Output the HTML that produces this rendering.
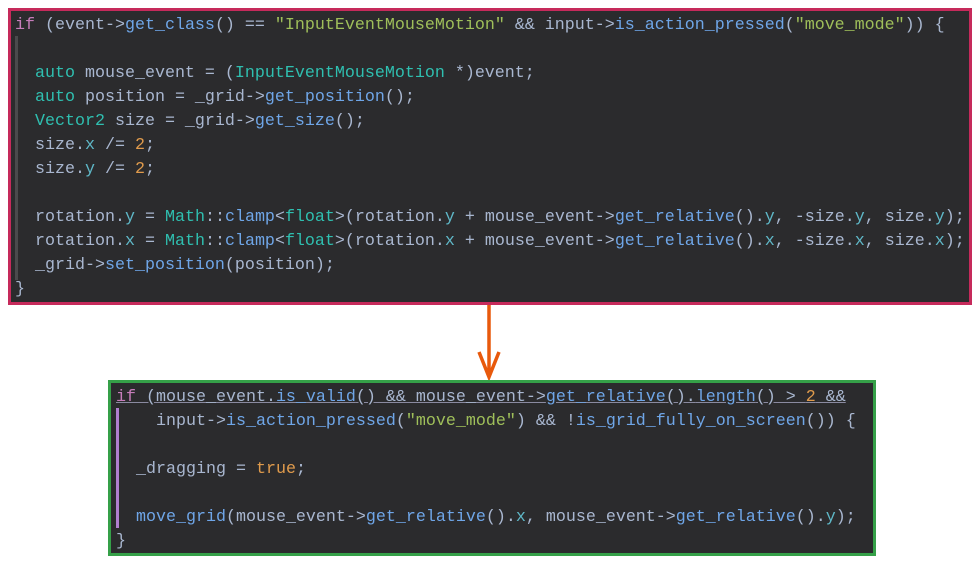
<!DOCTYPE html>
<html><head><style>
body{margin:0;width:978px;height:565px;background:#fff;position:relative;overflow:hidden;font-family:"Liberation Mono",monospace;}
.box{position:absolute;background:#2b2b2d;box-sizing:border-box;}
.l{position:absolute;white-space:pre;font-size:16.67px;line-height:24px;color:#a9b7d0;margin-top:2px}
.k{color:#c77dbb}.f{color:#6fa6e8}.s{color:#9fbf5a}.t{color:#2fbfb0}.n{color:#e09b4c}.o{color:#bcbec4}.p{color:#5fb8c8}
</style></head><body>
<div class="box" style="left:8px;top:8px;width:964px;height:297px;border:3px solid #c62a5b;"></div>
<div style="position:absolute;left:15px;top:36px;width:3px;height:244px;background:#4a4a4c"></div>
<div class="l" style="left:15px;top:12px"><span class="k">if</span> (event-&gt;<span class="f">get_class</span>() == <span class="s">"InputEventMouseMotion"</span> &amp;&amp; input-&gt;<span class="f">is_action_pressed</span>(<span class="s">"move_mode"</span>)) {</div>
<div class="l" style="left:35px;top:60px"><span class="t">auto</span> mouse_event = (<span class="t">InputEventMouseMotion</span> *)event;</div>
<div class="l" style="left:35px;top:84px"><span class="t">auto</span> position = _grid-&gt;<span class="f">get_position</span>();</div>
<div class="l" style="left:35px;top:108px"><span class="t">Vector2</span> size = _grid-&gt;<span class="f">get_size</span>();</div>
<div class="l" style="left:35px;top:132px">size.<span class="p">x</span> /= <span class="n">2</span>;</div>
<div class="l" style="left:35px;top:156px">size.<span class="p">y</span> /= <span class="n">2</span>;</div>
<div class="l" style="left:35px;top:204px">rotation.<span class="p">y</span> = <span class="t">Math</span>::<span class="f">clamp</span>&lt;<span class="t">float</span>&gt;(rotation.<span class="p">y</span> + mouse_event-&gt;<span class="f">get_relative</span>().<span class="p">y</span>, -size.<span class="p">y</span>, size.<span class="p">y</span>);</div>
<div class="l" style="left:35px;top:228px">rotation.<span class="p">x</span> = <span class="t">Math</span>::<span class="f">clamp</span>&lt;<span class="t">float</span>&gt;(rotation.<span class="p">x</span> + mouse_event-&gt;<span class="f">get_relative</span>().<span class="p">x</span>, -size.<span class="p">x</span>, size.<span class="p">x</span>);</div>
<div class="l" style="left:35px;top:252px">_grid-&gt;<span class="f">set_position</span>(position);</div>
<div class="l" style="left:15px;top:276px">}</div>

<svg style="position:absolute;left:0;top:0" width="978" height="565"><path d="M489 305V377M479 352L489 377L499 352" stroke="#e8590c" stroke-width="3.5" fill="none"/></svg>

<div class="box" style="left:108px;top:380px;width:768px;height:176px;border:3px solid #35a048;"></div>
<div style="position:absolute;left:116px;top:408px;width:3px;height:120px;background:#b07fd0"></div>
<div class="l" style="left:116px;top:384px;text-decoration:underline;text-decoration-color:#8a8aa0"><span class="k">if</span> (mouse_event.<span class="f">is_valid</span>() &amp;&amp; mouse_event-&gt;<span class="f">get_relative</span>().<span class="f">length</span>() &gt; <span class="n">2</span> &amp;&amp;</div>
<div class="l" style="left:156px;top:408px">input-&gt;<span class="f">is_action_pressed</span>(<span class="s">"move_mode"</span>) &amp;&amp; !<span class="f">is_grid_fully_on_screen</span>()) {</div>
<div class="l" style="left:136px;top:456px">_dragging = <span class="n">true</span>;</div>
<div class="l" style="left:136px;top:504px"><span class="f">move_grid</span>(mouse_event-&gt;<span class="f">get_relative</span>().<span class="p">x</span>, mouse_event-&gt;<span class="f">get_relative</span>().<span class="p">y</span>);</div>
<div class="l" style="left:116px;top:528px">}</div>
</body></html>
